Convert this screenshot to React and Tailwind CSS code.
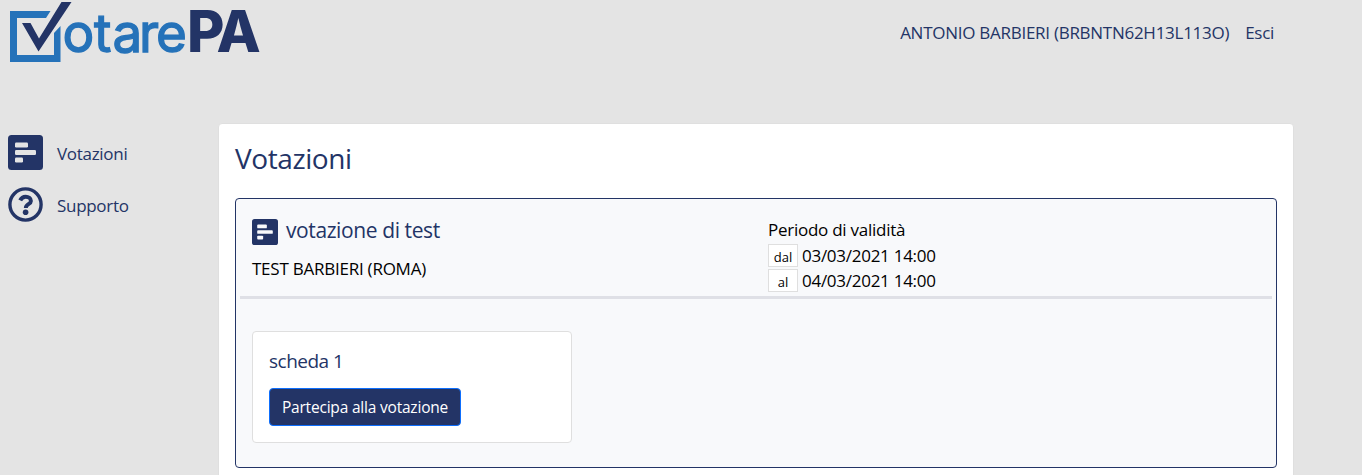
function Logo() {
  return (
    <svg className="block" width="270" height="70" viewBox="0 0 270 70">
      <path
        d="M10 11H50.5L46 18H17V55H54V33L60.5 26V62H10Z"
        fill="#2572b9"
      />
      <path d="M22 23H30.5L39 38.5L61.5 2H71.5L38.5 51.5Z" fill="#233466" />
      <text
        x="62.5 94 112.5 139 156"
        y="52"
        fontFamily="Inter, sans-serif"
        fontSize="53"
        fill="#2572b9"
        stroke="#2572b9"
        strokeWidth="1.3"
      >
        otare
      </text>
      <text x="187 216.5" y="52" fontFamily="Inter, sans-serif" fontSize="57.5" fontWeight="800" fill="#233466">
        PA
      </text>
    </svg>
  );
}

function PollIcon({ size }) {
  return (
    <svg className="block shrink-0" width={size} height={size} viewBox="0 0 35 35">
      <rect width="35" height="35" rx="3.5" fill="#233466" />
      <g fill="currentColor">
        <rect x="7" y="7.5" width="13" height="5" rx="1.2" />
        <rect x="7" y="15" width="21" height="5" rx="1.2" />
        <rect x="7" y="22.5" width="8" height="5" rx="1.2" />
      </g>
    </svg>
  );
}

function HelpIcon() {
  return (
    <svg className="block shrink-0" width="35" height="35" viewBox="0 0 35 35" fill="none" stroke="#233466">
      <circle cx="17.5" cy="17.5" r="15.6" strokeWidth="3.4" />
      <path d="M12.2 13.4C13.3 11 15 9.7 17.7 9.7C20.5 9.7 22.9 11.3 22.9 13.9C22.9 17.3 17.9 17 17.9 20.6V21" strokeWidth="4" />
      <circle cx="17.6" cy="25.3" r="2.8" fill="#233466" stroke="none" />
    </svg>
  );
}

const menu = [
  { label: "Votazioni", icon: <PollIcon size={35} /> },
  { label: "Supporto", icon: <HelpIcon /> },
];

const period = [
  { label: "dal", value: "03/03/2021 14:00" },
  { label: "al", value: "04/03/2021 14:00" },
];

export default function App() {
  return (
    <div className="h-[475px] overflow-hidden bg-[#e4e4e4] font-['Open_Sans',sans-serif] text-[17px] leading-6 text-black">
      {/* Header */}
      <header className="flex h-[123px] items-start justify-between pr-[88px]">
        <Logo />
        <nav className="flex gap-4 pt-[21px] text-[#233466]">
          <a href="#" className="tracking-[-0.27px]">ANTONIO BARBIERI (BRBNTN62H13L113O)</a>
          <a href="#" className="tracking-[-0.3px]">Esci</a>
        </nav>
      </header>

      <div className="flex">
        {/* Sidebar */}
        <aside className="flex w-[218px] shrink-0 flex-col gap-[17px] pl-2 pt-3 text-[#e4e4e4]">
          {menu.map(({ label, icon }) => (
            <a key={label} href="#" className="flex h-[35px] items-center gap-[14px]">
              {icon}
              <span className="pt-[2px] tracking-[-0.3px] text-[#233466]">{label}</span>
            </a>
          ))}
        </aside>

        {/* Content */}
        <main className="h-[400px] w-[1076px] rounded border border-[#dfdfdf] bg-white px-4 pt-4">
          <h1 className="h-[58px] text-[28px] leading-[36px] tracking-[-0.4px] text-[#233466]">Votazioni</h1>

          <section className="h-[270px] rounded border border-[#233466] bg-[#f8f9fb] px-1">
            <div className="flex h-[100px] border-b-[3px] border-[#dfe0e6] pl-3 pt-5">
              <div className="w-[516px]">
                <h2 className="flex h-[26px] items-center gap-2 text-[21px] tracking-[-0.4px] text-[#233466]">
                  <span className="text-[#f8f9fb]">
                    <PollIcon size={26} />
                  </span>
                  <span className="pb-[5px]">votazione di test</span>
                </h2>
                <p className="mt-3 tracking-[-0.24px]">TEST BARBIERI (ROMA)</p>
              </div>
              <div>
                <p className="-mt-px mb-[2px] tracking-[-0.26px]">Periodo di validità</p>
                {period.map(({ label, value }) => (
                  <div key={label} className="mb-[2px] flex h-[23px] items-center gap-1">
                    <span className="h-[23px] w-[30px] border border-[#dfdfdf] bg-white pt-[2px] text-center text-[13px] leading-[21px]">
                      {label}
                    </span>
                    <span className="tracking-[-0.27px]">{value}</span>
                  </div>
                ))}
              </div>
            </div>

            <div className="ml-3 mt-8 h-[112px] w-[320px] rounded border border-[#dfdfdf] bg-white px-4 pt-[17px]">
              <h3 className="text-[19px] leading-6 tracking-[-0.5px] text-[#233466]">scheda 1</h3>
              <button className="mt-[15px] h-[38px] w-[192px] rounded border border-[#0d6efd] bg-[#233466] text-[15.5px] tracking-[-0.2px] whitespace-nowrap text-white">
                Partecipa alla votazione
              </button>
            </div>
          </section>
        </main>
      </div>
    </div>
  );
}
